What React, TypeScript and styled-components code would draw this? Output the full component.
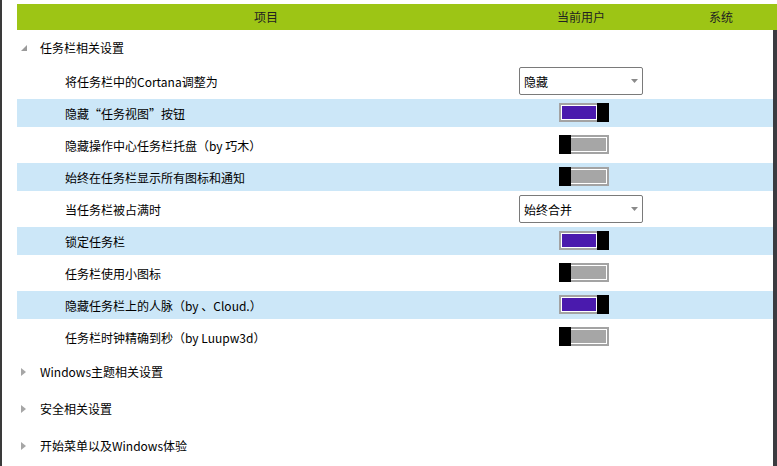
import React from "react";
import styled, { createGlobalStyle } from "styled-components";

const GlobalStyle = createGlobalStyle`
  html, body {
    margin: 0;
    padding: 0;
    background: #ffffff;
    overflow: hidden;
  }
  body {
    font-family: "Noto Sans CJK SC", "Noto Sans", "Liberation Sans", sans-serif;
    font-size: 12px;
    color: #000;
  }
`;

const Frame = styled.div`
  width: 777px;
  height: 466px;
  border-left: 2px solid #3a3a3a;
  padding: 4px 0 0 15px;
  box-sizing: border-box;
  overflow: hidden;
`;

const cols = "498px 132px 148px";

const Header = styled.div`
  display: grid;
  grid-template-columns: ${cols};
  height: 26px;
  background: #9dc515;
  color: #222;
  align-items: center;
  overflow: hidden;
`;

const HeaderCell = styled.div`
  text-align: center;
  line-height: 26px;
`;

const Body = styled.div`
  display: flex;
  flex-direction: column;
  height: 436px;
  border-right: 4px solid #3b3b40;
`;

const GroupHead = styled.div<{ $h: number }>`
  display: flex;
  align-items: center;
  height: ${(p) => p.$h}px;
  flex-shrink: 0;
`;

const Caret = styled.span`
  display: flex;
  width: 23px;
  padding-left: 4px;
  box-sizing: border-box;
`;

const Row = styled.div<{ $hl?: boolean }>`
  display: grid;
  grid-template-columns: 498px 132px;
  align-items: center;
  height: 28px;
  margin: 2px 0;
  flex-shrink: 0;
  background: ${(p) => (p.$hl ? "#cce7f8" : "transparent")};
`;

const Label = styled.div`
  padding-left: 48px;
  white-space: nowrap;
`;

const Control = styled.div`
  display: flex;
  justify-content: center;
`;

const Select = styled.div`
  display: flex;
  align-items: center;
  justify-content: space-between;
  width: 124px;
  height: 28px;
  box-sizing: border-box;
  border: 1px solid #7a7a7a;
  border-radius: 2px;
  background: #fff;
  padding: 0 4px 0 4px;
`;

const Toggle = styled.div<{ $on: boolean }>`
  display: flex;
  flex-direction: ${(p) => (p.$on ? "row" : "row-reverse")};
  width: 50px;
  height: 19px;
  margin-left: 6px;
  margin-top: -2px;
`;

const Track = styled.div<{ $on: boolean }>`
  flex: 1;
  background: #a3a3a3;
  padding: ${(p) => (p.$on ? "2px 0 2px 2px" : "2px 2px 2px 0")};
  display: flex;
`;

const Fill = styled.div<{ $on: boolean }>`
  flex: 1;
  border: 1px solid #fff;
  border-left-width: ${(p) => (p.$on ? "1px" : "0")};
  background: ${(p) => (p.$on ? "#4a1aad" : "#a6a6a6")};
`;

const Thumb = styled.div`
  width: 12px;
  background: #000;
`;

type Setting = {
  label: string;
  kind: "select" | "toggle";
  value?: string;
  on?: boolean;
};

const settings: Setting[] = [
  { label: "将任务栏中的Cortana调整为", kind: "select", value: "隐藏" },
  { label: "隐藏“任务视图”按钮", kind: "toggle", on: true },
  { label: "隐藏操作中心任务栏托盘（by 巧木）", kind: "toggle", on: false },
  { label: "始终在任务栏显示所有图标和通知", kind: "toggle", on: false },
  { label: "当任务栏被占满时", kind: "select", value: "始终合并" },
  { label: "锁定任务栏", kind: "toggle", on: true },
  { label: "任务栏使用小图标", kind: "toggle", on: false },
  { label: "隐藏任务栏上的人脉（by 、Cloud.）", kind: "toggle", on: true },
  { label: "任务栏时钟精确到秒（by Luupw3d）", kind: "toggle", on: false },
];

const collapsed = ["Windows主题相关设置", "安全相关设置", "开始菜单以及Windows体验"];

const Expanded = () => (
  <svg width="6" height="6" viewBox="0 0 6 6">
    <polygon points="6,0 6,6 0,6" fill="#9a9a9a" />
  </svg>
);

const Collapsed = () => (
  <svg width="5" height="8" viewBox="0 0 5 8">
    <polygon points="0,0 5,4 0,8" fill="#a6a6a6" />
  </svg>
);

const Arrow = () => (
  <svg width="7" height="4" viewBox="0 0 7 4">
    <polygon points="0,0 7,0 3.5,4" fill="#8a8a8a" />
  </svg>
);

export default function App() {
  return (
    <>
      <GlobalStyle />
      <Frame>
        <Header>
          <HeaderCell>项目</HeaderCell>
          <HeaderCell>当前用户</HeaderCell>
          <HeaderCell>系统</HeaderCell>
        </Header>
        <Body>
          <GroupHead $h={35}>
            <Caret>
              <Expanded />
            </Caret>
            任务栏相关设置
          </GroupHead>
          {settings.map((s, i) => (
            <Row key={i} $hl={i % 2 === 1}>
              <Label>{s.label}</Label>
              <Control>
                {s.kind === "select" ? (
                  <Select>
                    <span>{s.value}</span>
                    <Arrow />
                  </Select>
                ) : (
                  <Toggle $on={!!s.on}>
                    <Track $on={!!s.on}>
                      <Fill $on={!!s.on} />
                    </Track>
                    <Thumb />
                  </Toggle>
                )}
              </Control>
            </Row>
          ))}
          {collapsed.map((g) => (
            <GroupHead key={g} $h={37}>
              <Caret>
                <Collapsed />
              </Caret>
              {g}
            </GroupHead>
          ))}
        </Body>
      </Frame>
    </>
  );
}
